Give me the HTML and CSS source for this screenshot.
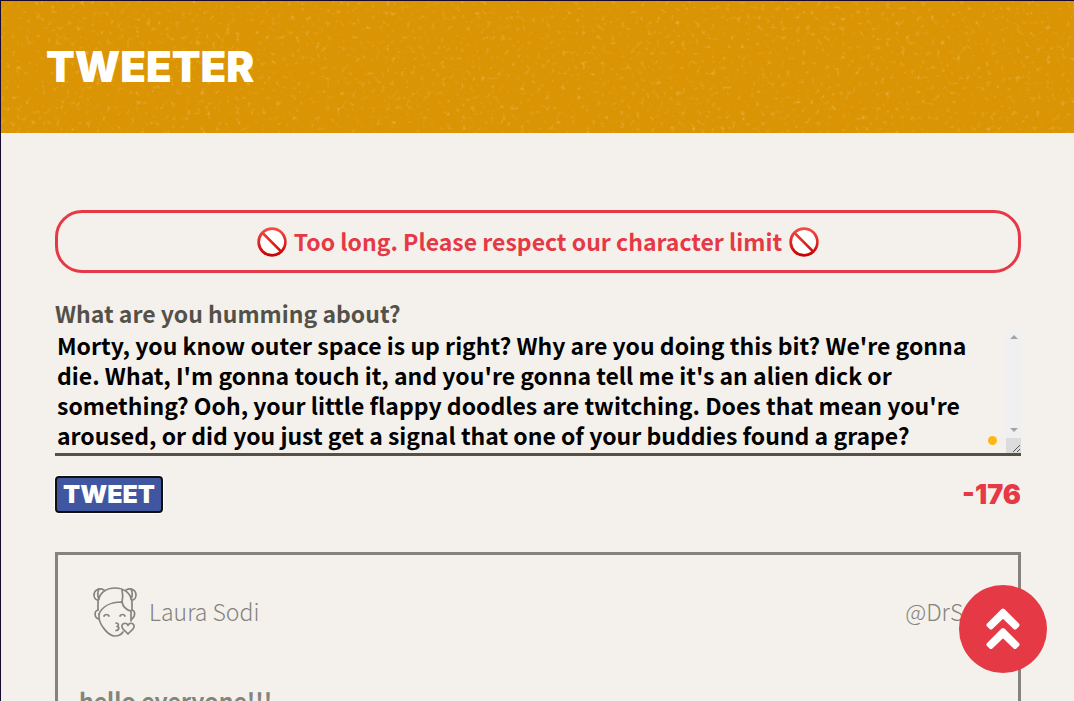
FILE: index.html
```html
<!DOCTYPE html>
<html lang="en">
<head>
<meta charset="utf-8">
<meta name="viewport" content="width=device-width, initial-scale=1">
<title>Tweeter</title>
<link rel="stylesheet" href="styles.css">
</head>
<body>
<header class="banner">
  <svg class="banner-texture" aria-hidden="true">
    <filter id="speckle" x="0" y="0" width="100%" height="100%" color-interpolation-filters="sRGB">
      <feTurbulence type="fractalNoise" baseFrequency="0.2" numOctaves="3" seed="7"/>
      <feColorMatrix values="0 0 0 0 0.94  0 0 0 0 0.78  0 0 0 0 0.42  1.6 0 0 0 -0.97"/>
    </filter>
    <rect width="100%" height="100%" filter="url(#speckle)"/>
  </svg>
  <h1 class="logo">TWEETER</h1>
</header>
<main class="content">
  <p class="alert" role="alert">
    <svg class="ban" viewBox="0 0 30 30" aria-hidden="true">
      <defs><linearGradient id="red" x1="0" y1="0" x2="0" y2="1"><stop offset="0" stop-color="#f44f4a"/><stop offset="1" stop-color="#c60000"/></linearGradient></defs>
      <circle cx="15" cy="15" r="13.5" fill="#fff"/>
      <path fill="url(#red)" fill-rule="evenodd" d="M15 .3a14.7 14.7 0 1 0 0 29.4A14.7 14.7 0 0 0 15 .3zM15 3a12 12 0 0 1 9.200 19.700L7.300 5.800A12 12 0 0 1 15 3zM5.500 7.700L22.300 24.500A12 12 0 0 1 5.500 7.700z"/>
    </svg>
    <span>Too long. Please respect our character limit</span>
    <svg class="ban" viewBox="0 0 30 30" aria-hidden="true">
      <circle cx="15" cy="15" r="13.5" fill="#fff"/>
      <path fill="url(#red)" fill-rule="evenodd" d="M15 .3a14.7 14.7 0 1 0 0 29.4A14.7 14.7 0 0 0 15 .3zM15 3a12 12 0 0 1 9.200 19.700L7.300 5.800A12 12 0 0 1 15 3zM5.500 7.700L22.300 24.500A12 12 0 0 1 5.500 7.700z"/>
    </svg>
  </p>
  <form class="composer">
    <label for="tweet-text">What are you humming about?</label>
    <div class="field">
      <textarea id="tweet-text" name="text" spellcheck="false">Morty, you know outer space is up right? Why are you doing this bit? We're gonna die. What, I'm gonna touch it, and you're gonna tell me it's an alien dick or something? Ooh, your little flappy doodles are twitching. Does that mean you're aroused, or did you just get a signal that one of your buddies found a grape?</textarea>
      <span class="scroll-track" aria-hidden="true">
        <svg viewBox="0 0 8 4"><path d="M0 4h8L4 0z"/></svg>
        <svg viewBox="0 0 8 4"><path d="M0 0h8L4 4z"/></svg>
      </span>
      <span class="status-dot"></span>
    </div>
    <div class="composer-actions">
      <button class="submit" type="submit">TWEET</button>
      <output class="counter" for="tweet-text">-176</output>
    </div>
  </form>
  <article class="tweet">
    <header class="tweet-header">
      <svg class="avatar" viewBox="0 0 44 50" fill="none" stroke="currentColor" stroke-width="1.700" stroke-linecap="round" stroke-linejoin="round" aria-hidden="true">
        <path d="M5 23V15C6 6 13 1 22 1s16 5 17 14v8"/>
        <path d="M6 27c3-7 11-12 23-12 1 5 5 8 9 9v10"/>
        <path d="M6 27v4c1 7 9 18 16 18 3 0 6-1 8-4"/>
        <path d="M29 15c1-4 1-8 0-12"/>
        <path d="M11 3C5 0 1 4 1 8c0 3 2 5 4 5M6 2c-2 4-1 8 0 10M33 3c6-3 10 1 10 5 0 3-2 5-4 5M38 2c2 4 1 8 0 10"/>
        <path d="M5 23c-4 1-4 8 1 9M39 23c4 1 3 7 0 9"/>
        <path d="M11 29c1-2 4-2 5 0M27 29c1-2 4-2 5 0"/>
        <path d="M23 36c3 0 3 3 1 3.500 3 0 2 4-1 4"/>
        <path d="M35 47c-3-4-7-5-6-8.500 1-3 5-3 6 0 1-3 5-3 6 0 1 3.500-3 4.500-6 8.500z"/>
      </svg>
      <span class="author">Laura Sodi</span>
      <span class="handle">@DrSol</span>
    </header>
    <p class="tweet-body">hello everyone!!!</p>
  </article>
</main>
<button class="to-top" type="button" aria-label="Back to top">
  <svg viewBox="0 0 34 42" fill="#fff" stroke="#fff" stroke-width="4" stroke-linejoin="round" aria-hidden="true">
    <path d="M17 2.500L31.500 17 29 19.500 17 8 5 19.500 2.500 17zM17 22L31.500 36.500 29 39 17 27.500 5 39 2.500 36.500z"/>
  </svg>
</button>
</body>
</html>
```
FILE: styles.css
```css
* { box-sizing: border-box; }

html { height: 100%; overflow: hidden; }

body {
  margin: 0;
  min-height: 100%;
  border-top: 1px solid #190a32;
  border-left: 1px solid #190a32;
  background: #f4f1ec;
  color: #545149;
  font: 700 23px/30px "Noto Sans CJK JP", "Noto Sans", sans-serif;
}

.banner {
  position: relative;
  display: flex;
  align-items: center;
  height: 132px;
  padding: 0 45px;
  background: #db9404;
}

.banner-texture {
  position: absolute;
  inset: 0;
  width: 100%;
  height: 100%;
}

.logo {
  position: relative;
  margin: 0;
  color: #fff;
  font: 900 42px/44px Inter, sans-serif;
}

.content { padding: 77px 53px 0 54px; }

.alert {
  display: flex;
  align-items: center;
  justify-content: center;
  gap: 7px;
  margin: 0 0 25px;
  padding: 14px 16px 13px;
  border: 3px solid #e63946;
  border-radius: 27px;
  color: #e63946;
  line-height: 28px;
}

.alert span { padding-bottom: 2px; }

.ban { width: 30px; height: 30px; }

.composer label { display: block; }

.field {
  position: relative;
  margin-top: 2px;
}

textarea {
  display: block;
  width: 100%;
  height: 126px;
  padding: 0 17px 3px 2px;
  border: 0;
  border-bottom: 3px solid #545149;
  outline: 0;
  overflow: hidden;
  resize: vertical;
  background: transparent;
  color: #000;
  font: inherit;
}

textarea::-webkit-resizer {
  background: #dcdcdc url("data:image/svg+xml,%3Csvg xmlns='http://www.w3.org/2000/svg' viewBox='0 0 15 15'%3E%3Cpath stroke='%23555' d='M7 14l7-7M11 14l3-3'/%3E%3C/svg%3E") center no-repeat;
}

.scroll-track {
  position: absolute;
  top: 0;
  right: 0;
  bottom: 18px;
  display: flex;
  flex-direction: column;
  align-items: center;
  justify-content: space-between;
  width: 15px;
  padding: 5px 0 6px;
  background: #f0f0f0;
  pointer-events: none;
}

.scroll-track svg {
  width: 8px;
  height: 4px;
  fill: #a3a3a3;
}

.status-dot {
  position: absolute;
  right: 24px;
  bottom: 11px;
  width: 9px;
  height: 9px;
  border-radius: 50%;
  background: #ffb617;
}

.composer-actions {
  display: flex;
  align-items: center;
  justify-content: space-between;
  margin-top: 20px;
}

.submit {
  padding: 1px 6px;
  border: 2px solid #101010;
  border-radius: 4px;
  box-shadow: 0 0 0 1px #fff;
  background: #4056a1;
  color: #fff;
  font: 900 25px/31px Inter, sans-serif;
}

.counter {
  color: #e63946;
  font: 900 27px/31px Inter, sans-serif;
}

.tweet {
  margin-top: 39px;
  padding: 32px 21px;
  border: 3px solid #86837c;
  color: #86837c;
}

.tweet-header {
  display: flex;
  align-items: center;
  padding: 0 14px;
  font-weight: 300;
  line-height: 28px;
}

.avatar { width: 44px; height: 50px; }

.author,
.handle { padding-bottom: 2px; }

.author { margin-left: 12px; }
.handle { margin-left: auto; }

.tweet-body { margin: 48px 0 0; }

.to-top {
  position: fixed;
  right: 27px;
  bottom: 28px;
  display: flex;
  align-items: center;
  justify-content: center;
  width: 88px;
  height: 88px;
  padding: 0;
  border: 0;
  border-radius: 50%;
  background: #e63946;
}

.to-top svg { width: 34px; height: 42px; }
```
